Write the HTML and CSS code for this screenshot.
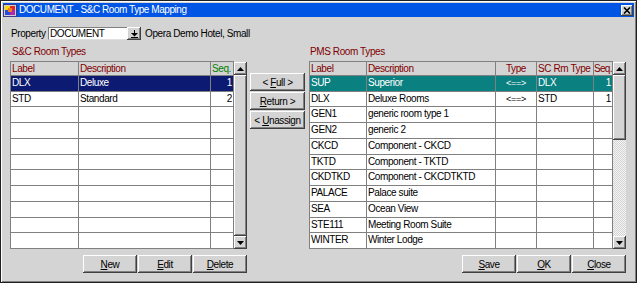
FILE: index.html
```html
<!DOCTYPE html>
<html>
<head>
<meta charset="utf-8">
<title>DOCUMENT - S&amp;C Room Type Mapping</title>
<link rel="stylesheet" href="styles.css">
</head>
<body>
<div class="window">
  <div class="titlebar">
    <svg class="app-icon" width="14" height="13" viewBox="0 0 14 13">
      <rect x="0.5" y="0.5" width="13" height="12" fill="#d0d0d0" stroke="#3a3a8a"/>
      <rect x="2" y="2" width="5" height="4" fill="#ffd400"/>
      <rect x="7" y="2" width="5" height="4" fill="#e02828"/>
      <rect x="2" y="6" width="5" height="5" fill="#2848e0"/>
      <rect x="7" y="6" width="5" height="5" fill="#b028b0"/>
      <rect x="5" y="4" width="4" height="4" fill="#f08020"/>
    </svg>
    <span class="title">DOCUMENT - S&amp;C Room Type Mapping</span>
    <span class="close-btn">
      <svg width="8" height="7" viewBox="0 0 8 7"><path d="M1 0.5 L7 6.5 M7 0.5 L1 6.5" stroke="#000" stroke-width="1.6"/></svg>
    </span>
  </div>

  <div class="content">
    <div class="property-row">
      <span class="prop-label">Property</span>
      <div class="combo">
        <span class="combo-field">DOCUMENT</span>
        <span class="combo-btn">
          <svg width="7" height="8" viewBox="0 0 7 8"><rect x="3" y="0" width="1" height="3" fill="#000"/><path d="M0 3 H7 L3.5 6.5 Z" fill="#000"/><rect x="0" y="7" width="7" height="1" fill="#000"/></svg>
        </span>
      </div>
      <span class="hotel">Opera Demo Hotel, Small</span>
    </div>

    <div class="panels">
      <div class="panel panel-left">
        <div class="section-label">S&amp;C Room Types</div>
        <div class="table-wrap">
          <div class="grid grid-left">
            <div class="hd">Label</div><div class="hd">Description</div><div class="hd hd-green">Seq.</div>
            <div class="cell sel">DLX</div><div class="cell sel">Deluxe</div><div class="cell sel r">1</div>
            <div class="cell">STD</div><div class="cell">Standard</div><div class="cell r">2</div>
            <div class="cell"></div><div class="cell"></div><div class="cell"></div>
            <div class="cell"></div><div class="cell"></div><div class="cell"></div>
            <div class="cell"></div><div class="cell"></div><div class="cell"></div>
            <div class="cell"></div><div class="cell"></div><div class="cell"></div>
            <div class="cell"></div><div class="cell"></div><div class="cell"></div>
            <div class="cell"></div><div class="cell"></div><div class="cell"></div>
            <div class="cell"></div><div class="cell"></div><div class="cell"></div>
            <div class="cell"></div><div class="cell"></div><div class="cell"></div>
            <div class="cell"></div><div class="cell"></div><div class="cell"></div>
          </div>
          <div class="scrollbar">
            <span class="sb-btn"><svg width="7" height="4" viewBox="0 0 7 4"><path d="M3.5 0 L7 4 H0 Z" fill="#000"/></svg></span>
            <span class="sb-thumb sb-full"></span>
            <span class="sb-btn"><svg width="7" height="4" viewBox="0 0 7 4"><path d="M0 0 H7 L3.5 4 Z" fill="#000"/></svg></span>
          </div>
        </div>
        <div class="btn-row">
          <span class="btn"><u>N</u>ew</span>
          <span class="btn"><u>E</u>dit</span>
          <span class="btn"><u>D</u>elete</span>
        </div>
      </div>

      <div class="mid">
        <span class="btn btn-mid">&lt; <u>F</u>ull &gt;</span>
        <span class="btn btn-mid"><u>R</u>eturn &gt;</span>
        <span class="btn btn-mid">&lt; <u>U</u>nassign</span>
      </div>

      <div class="panel panel-right">
        <div class="section-label">PMS Room Types</div>
        <div class="table-wrap">
          <div class="grid grid-right">
            <div class="hd">Label</div><div class="hd">Description</div><div class="hd c">Type</div><div class="hd">SC Rm Type</div><div class="hd tight">Seq.</div>
            <div class="cell tsel">SUP</div><div class="cell tsel">Superior</div><div class="cell tsel c arrow">&lt;==&gt;</div><div class="cell tsel">DLX</div><div class="cell tsel r">1</div>
            <div class="cell">DLX</div><div class="cell">Deluxe Rooms</div><div class="cell c arrow">&lt;==&gt;</div><div class="cell">STD</div><div class="cell r">1</div>
            <div class="cell">GEN1</div><div class="cell">generic room type 1</div><div class="cell"></div><div class="cell"></div><div class="cell"></div>
            <div class="cell">GEN2</div><div class="cell">generic 2</div><div class="cell"></div><div class="cell"></div><div class="cell"></div>
            <div class="cell">CKCD</div><div class="cell">Component - CKCD</div><div class="cell"></div><div class="cell"></div><div class="cell"></div>
            <div class="cell">TKTD</div><div class="cell">Component - TKTD</div><div class="cell"></div><div class="cell"></div><div class="cell"></div>
            <div class="cell">CKDTKD</div><div class="cell">Component - CKCDTKTD</div><div class="cell"></div><div class="cell"></div><div class="cell"></div>
            <div class="cell">PALACE</div><div class="cell">Palace suite</div><div class="cell"></div><div class="cell"></div><div class="cell"></div>
            <div class="cell">SEA</div><div class="cell">Ocean View</div><div class="cell"></div><div class="cell"></div><div class="cell"></div>
            <div class="cell">STE111</div><div class="cell">Meeting Room Suite</div><div class="cell"></div><div class="cell"></div><div class="cell"></div>
            <div class="cell">WINTER</div><div class="cell">Winter Lodge</div><div class="cell"></div><div class="cell"></div><div class="cell"></div>
          </div>
          <div class="scrollbar">
            <span class="sb-btn"><svg width="7" height="4" viewBox="0 0 7 4"><path d="M3.5 0 L7 4 H0 Z" fill="#000"/></svg></span>
            <span class="sb-thumb sb-part"></span>
            <span class="sb-track"></span>
            <span class="sb-btn"><svg width="7" height="4" viewBox="0 0 7 4"><path d="M0 0 H7 L3.5 4 Z" fill="#000"/></svg></span>
          </div>
        </div>
        <div class="btn-row">
          <span class="btn"><u>S</u>ave</span>
          <span class="btn"><u>O</u>K</span>
          <span class="btn"><u>C</u>lose</span>
        </div>
      </div>
    </div>
  </div>
</div>
</body>
</html>
```

FILE: styles.css
```css
* { box-sizing: border-box; }
html, body { margin: 0; padding: 0; }
body {
  width: 637px;
  height: 283px;
  overflow: hidden;
  background: #d4d4d4;
  font-family: "Liberation Sans", Arial, sans-serif;
  font-size: 10px;
  letter-spacing: -0.4px;
  color: #000;
}
u { text-decoration: underline; text-underline-offset: 1px; }

.window {
  width: 637px;
  height: 283px;
  border: 1px solid #202020;
  padding: 2px;
  background: #d4d4d4;
  box-shadow: inset 1px 1px #ffffff, inset -1px -1px #808080;
  display: flex;
  flex-direction: column;
}

.titlebar {
  height: 14px;
  background: #0055e5;
  display: flex;
  align-items: center;
  color: #fff;
}
.app-icon { display: block; margin-right: 2px; }
.title { flex: 1; line-height: 14px; font-size: 10px; letter-spacing: -0.45px; }
.close-btn {
  width: 12px;
  height: 11px;
  margin-right: 1px;
  background: #d4d4d4;
  box-shadow: inset -1px -1px #404040, inset 1px 1px #ffffff, inset -2px -2px #808080;
  display: flex;
  align-items: center;
  justify-content: center;
}
.close-btn svg { display: block; }

.content { padding-left: 7px; }

.property-row {
  display: flex;
  align-items: center;
  height: 13px;
  margin-top: 10px;
  padding-left: 1px;
}
.prop-label { width: 37px; white-space: nowrap; }
.combo { display: flex; height: 13px; }
.combo-field {
  width: 79px;
  height: 13px;
  background: #fff;
  border-top: 1px solid #808080;
  border-left: 1px solid #808080;
  border-bottom: 1px solid #e0e0e0;
  line-height: 11px;
  padding-left: 1px;
}
.combo-btn {
  width: 14px;
  height: 13px;
  background: #d4d4d4;
  box-shadow: inset -1px -1px #404040, inset 1px 1px #ffffff, inset -2px -2px #808080;
  display: flex;
  align-items: center;
  justify-content: center;
}
.combo-btn svg { display: block; }
.hotel { margin-left: 4px; }

.panels {
  display: flex;
  align-items: flex-start;
  margin-top: 6px;
}
.panel { display: flex; flex-direction: column; }
.panel-left { width: 237px; }
.panel-right { width: 317px; margin-left: 4px; }

.section-label {
  color: #800000;
  line-height: 12px;
  height: 15px;
  padding-left: 2px;
}
.panel-right .section-label { padding-left: 1px; }

.table-wrap { display: flex; }

.grid {
  display: grid;
  grid-template-rows: 14px repeat(11, 1fr);
  height: 188px;
  border-top: 1px solid #808080;
  border-left: 1px solid #808080;
}
.grid-left { grid-template-columns: 68px 132px 23px; }
.grid-right { grid-template-columns: 57px 129px 41px 57px 19px; }

.hd, .cell {
  border-right: 1px solid #808080;
  border-bottom: 1px solid #808080;
  white-space: nowrap;
  overflow: hidden;
  padding: 0 1px 0 1px;
}
.hd {
  background: #d4d4d4;
  color: #800000;
  line-height: 13px;
}
.hd-green { color: #008000; }
.hd.tight { padding: 0; letter-spacing: -0.7px; }
.cell {
  background: #fff;
  line-height: 14px;
}
.sel { background: #0c1a72; color: #fff; }
.tsel { background: #0a8080; color: #fff; }
.r { text-align: right; }
.c { text-align: center; }
.arrow { font-size: 9px; letter-spacing: -0.2px; }

.scrollbar {
  width: 13px;
  height: 187px;
  margin-top: 1px;
  display: flex;
  flex-direction: column;
}
.sb-btn {
  width: 13px;
  height: 13px;
  flex: none;
  background: #d4d4d4;
  box-shadow: inset -1px -1px #404040, inset 1px 1px #ffffff, inset -2px -2px #808080;
  display: flex;
  align-items: center;
  justify-content: center;
}
.sb-btn svg { display: block; }
.sb-thumb {
  background: #d4d4d4;
  box-shadow: inset -1px -1px #404040, inset 1px 1px #ffffff, inset -2px -2px #808080;
}
.sb-full { flex: 1; }
.sb-part { height: 65px; flex: none; }
.sb-track {
  flex: 1;
  background: repeating-conic-gradient(#d4d4d4 0 25%, #f4f4f4 0 50%) 0 0 / 2px 2px;
}

.btn-row {
  display: flex;
  justify-content: flex-end;
  gap: 1px;
  margin-top: 6px;
}
.btn {
  width: 54px;
  height: 18px;
  background: #d4d4d4;
  box-shadow: inset -1px -1px #404040, inset 1px 1px #ffffff, inset -2px -2px #808080;
  display: flex;
  align-items: center;
  justify-content: center;
  line-height: 13px;
  white-space: pre;
}

.mid {
  display: flex;
  flex-direction: column;
  gap: 1px;
  width: 55px;
  margin-left: 3px;
  padding-top: 27px;
}
.btn-mid { width: 55px; }
```
